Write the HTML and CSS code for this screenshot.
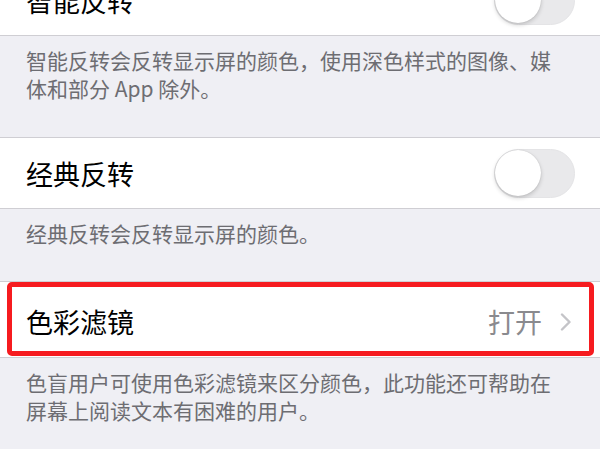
FILE: index.html
```html
<!DOCTYPE html>
<html lang="zh-CN">
<head>
<meta charset="utf-8">
<link rel="stylesheet" href="styles.css">
</head>
<body>
<div class="page">
  <div class="row row-first">
    <span class="title">智能反转</span>
    <span class="toggle"><span class="knob"></span></span>
  </div>
  <p class="footer footer-two">智能反转会反转显示屏的颜色，使用深色样式的图像、媒体和部分 App 除外。</p>

  <div class="row">
    <span class="title">经典反转</span>
    <span class="toggle"><span class="knob"></span></span>
  </div>
  <p class="footer">经典反转会反转显示屏的颜色。</p>

  <div class="row row-marked">
    <span class="title">色彩滤镜</span>
    <span class="value">打开</span>
    <svg class="chevron" width="12" height="18" viewBox="0 0 12 18"><path d="M2 1.5 L9.5 9 L2 16.5" fill="none" stroke="#c4c4c8" stroke-width="2.4" stroke-linecap="round" stroke-linejoin="round"/></svg>
  </div>
  <p class="footer">色盲用户可使用色彩滤镜来区分颜色，此功能还可帮助在屏幕上阅读文本有困难的用户。</p>
</div>
</body>
</html>
```

FILE: styles.css
```css
html, body {
  margin: 0;
  padding: 0;
  background: #efeff4;
}
body {
  width: 600px;
  height: 449px;
  overflow: hidden;
  font-family: "Noto Sans CJK SC", "Noto Sans", sans-serif;
}
.page {
  margin-top: -35px;
}
.row {
  display: flex;
  align-items: center;
  box-sizing: border-box;
  height: 72px;
  padding: 0 26px 0 26px;
  background: #ffffff;
  border-top: 1px solid #cfced3;
  border-bottom: 1px solid #cfced3;
}
.row-first {
  border-top: none;
  height: 71px;
}
.title {
  flex: 1;
  font-size: 27px;
  color: #000000;
  line-height: 1;
}
.toggle {
  position: relative;
  width: 81px;
  height: 49px;
  box-sizing: border-box;
  border-radius: 25px;
  background: #e9e9eb;
  border: 1.5px solid #e4e4e6;
  margin-right: -1px;
}
.knob {
  position: absolute;
  left: 0;
  top: 0;
  width: 46px;
  height: 46px;
  border-radius: 50%;
  background: #ffffff;
  box-shadow: 0 2px 4px rgba(0,0,0,0.18), 0 0 1px rgba(0,0,0,0.2);
}
.footer {
  margin: 0;
  padding: 10px 40px 34px 26px;
  font-size: 21px;
  line-height: 28px;
  color: #6d6d72;
}
.footer-two {
  padding-bottom: 35px;
}
.row-marked {
  position: relative;
  height: 77px;
  padding-top: 4px;
  padding-right: 28px;
}
.row-marked::after {
  content: "";
  position: absolute;
  left: 7px;
  right: 6px;
  top: 0;
  bottom: 1px;
  border: 5px solid #f61b1f;
  border-radius: 5px;
}
.value {
  font-size: 27px;
  line-height: 1;
  color: #8a8a8e;
  margin-right: 18px;
}
.chevron {
  display: block;
}
```
